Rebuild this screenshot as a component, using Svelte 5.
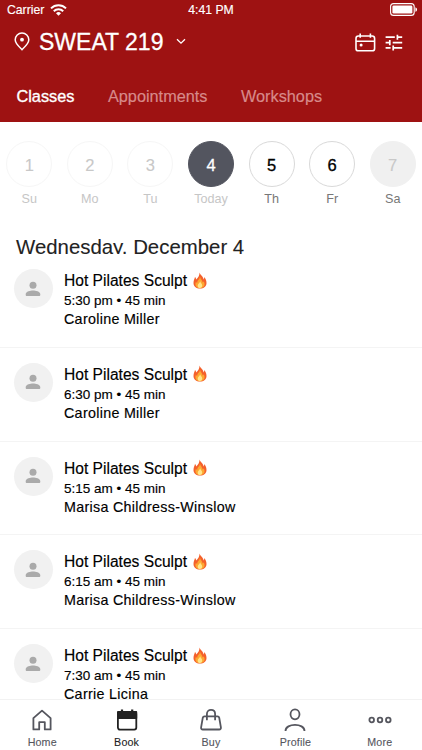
<script>
  let tabs = ["Classes", "Appointments", "Workshops"];
  let activeTab = "Classes";

  let days = [
    { date: 1, label: "Su", state: "past" },
    { date: 2, label: "Mo", state: "past" },
    { date: 3, label: "Tu", state: "past" },
    { date: 4, label: "Today", state: "selected" },
    { date: 5, label: "Th", state: "open" },
    { date: 6, label: "Fr", state: "open" },
    { date: 7, label: "Sa", state: "closed" },
  ];

  let classes = [
    { name: "Hot Pilates Sculpt", time: "5:30 pm", length: "45 min", teacher: "Caroline Miller" },
    { name: "Hot Pilates Sculpt", time: "6:30 pm", length: "45 min", teacher: "Caroline Miller" },
    { name: "Hot Pilates Sculpt", time: "5:15 am", length: "45 min", teacher: "Marisa Childress-Winslow" },
    { name: "Hot Pilates Sculpt", time: "6:15 am", length: "45 min", teacher: "Marisa Childress-Winslow" },
    { name: "Hot Pilates Sculpt", time: "7:30 am", length: "45 min", teacher: "Carrie Licina" },
  ];

  let nav = ["Home", "Book", "Buy", "Profile", "More"];
  let activeNav = "Book";
</script>

<div class="app">
  <header>
    <div class="status">
      <div class="carrier">
        <span>Carrier</span>
        <svg width="17" height="12" viewBox="0 0 17 12" fill="none" stroke="#fff" stroke-width="2">
          <path d="M1 4.4a10.6 10.6 0 0 1 15 0" />
          <path d="M3.8 7.2a6.6 6.6 0 0 1 9.4 0" />
          <path d="M8.5 11.8 6 9.3a3.5 3.5 0 0 1 5 0z" fill="#fff" stroke="none" />
        </svg>
      </div>
      <span class="clock">4:41 PM</span>
      <svg class="battery" width="28" height="13" viewBox="0 0 28 13">
        <rect x=".6" y=".6" width="23.6" height="11.8" rx="3" fill="none" stroke="#fff" stroke-width="1.1" />
        <rect x="2.4" y="2.4" width="20" height="8.2" rx="1.3" fill="#fff" />
        <path d="M25.4 4.2c2.2.8 2.2 3.8 0 4.6z" fill="#fff" />
      </svg>
    </div>

    <div class="location">
      <svg width="16" height="19" viewBox="0 0 16 19" fill="none" stroke="#fff" stroke-width="1.5">
        <path d="M8 17.6C5.4 15.1 1.2 11.6 1.2 7.8a6.8 6.8 0 0 1 13.6 0c0 3.8-4.2 7.3-6.8 9.8z" />
        <circle cx="8" cy="7.7" r="1.9" fill="#fff" stroke="none" />
      </svg>
      <h1>SWEAT 219</h1>
      <svg class="chevron" width="10" height="7" viewBox="0 0 10 7" fill="none" stroke="#fff" stroke-width="1.3">
        <path d="m1 1.2 4 4 4-4" />
      </svg>
      <div class="actions">
        <svg width="21" height="19" viewBox="0 0 21 19" fill="none" stroke="#fff" stroke-width="1.6">
          <rect x="1" y="3" width="18.6" height="14.8" rx="2.4" />
          <path d="M1 8.2h18.6M5.2.4v4.4M15.4.4v4.4" />
          <circle cx="6.1" cy="11.9" r="1.5" fill="#fff" stroke="none" />
        </svg>
        <svg width="18" height="17" viewBox="0 0 18 17" fill="none" stroke="#fff" stroke-width="1.7">
          <path d="M.6 3.2h9.2M12.4 3.2h4.8M12.4.7v5M.6 8.6h4M7.7 8.6h9.5M4.8 6v5.2M.6 13.9h5M8.2 13.9h9M8.2 11.4v5" />
        </svg>
      </div>
    </div>

    <div class="tabs">
      {#each tabs as tab}
        <span class:active={tab == activeTab}>{tab}</span>
      {/each}
    </div>
  </header>

  <div class="week">
    {#each days as day}
      <div class="day {day.state}">
        <div class="date">{day.date}</div>
        <span>{day.label}</span>
      </div>
    {/each}
  </div>

  <h2>Wednesday, December 4</h2>

  <main>
    {#each classes as item}
      <div class="class">
        <div class="avatar">
          <svg width="16" height="16" viewBox="0 0 16 16" fill="#aaa">
            <circle cx="8" cy="4.2" r="3.5" />
            <path d="M.7 13.2C.7 10.6 5.5 9.6 8 9.6s7.3 1 7.3 3.6v.6c0 .8-.4 1.200-1.200 1.200H1.900c-.8 0-1.200-.4-1.200-1.200z" />
          </svg>
        </div>
        <div class="info">
          <h3>
            {item.name}
            <svg width="14" height="17" viewBox="0 0 14 17">
              <path d="M6.5.5C7.2 3 10.3 4.3 10.7 7.5c.5-.6.6-1.5.4-2.4 1.6 1.6 2.4 3.7 2.4 5.9 0 3.3-2.7 5.6-6.500 5.600S.5 14.300.5 11C.5 8.500 1.500 6.800 2 4.900c.8.8 1.100 1.500 1.200 2.600C5.200 5.600 6.600 3.500 6.500.5z" fill="#f4602b" />
              <path d="M7 4.800c.3 2.200 2.400 3.300 2.700 5.800.5-.3.8-.8.9-1.400 2.200 3.300.5 6.900-3.500 6.900-3.800 0-5.700-2.900-4.100-6.400.3.600.6 1 1.100 1.200C4.200 8.200 6.800 7.300 7 4.800z" fill="#fda832" />
              <path d="M7.200 9.300c0 1.500 2 2.400 2 4.300 0 1.500-.9 2.400-2.200 2.400s-2.300-.9-2.300-2.300c0-1.800 2-2.300 2.500-4.400z" fill="#ffe58a" />
            </svg>
          </h3>
          <p class="time">{item.time} • {item.length}</p>
          <p class="teacher">{item.teacher}</p>
        </div>
      </div>
    {/each}
  </main>

  <nav>
    {#each nav as item}
      <div class="nav-item" class:active={item == activeNav}>
        <svg width="24" height="24" viewBox="0 0 24 24" fill="none" stroke="currentColor" stroke-width="1.8">
          {#if item == "Home"}
            <path d="M3.4 10.2 12 2.6l8.6 7.6v11.2h-5.8v-7.2H9.2v7.2H3.4z" stroke-linejoin="round" />
          {:else if item == "Book"}
            <rect x="2.9" y="4" width="18.4" height="17.6" rx="2" />
            <path d="M2.9 4h18.4v6.2H2.9z" fill="currentColor" stroke-linejoin="round" />
            <path d="M7 1.4V5M17.2 1.4V5" stroke-width="2.2" />
          {:else if item == "Buy"}
            <path d="M5.5 8.3h13c1 0 1.5.5 1.7 1.4l1.700 9.600c.2 1.400-.5 2.200-1.700 2.200H3.800c-1.200 0-1.900-.8-1.700-2.200l1.700-9.600c.2-.9.7-1.400 1.700-1.400z" />
            <path d="M7.9 12.2V6.1c0-5.6 8.2-5.6 8.2 0v6.1" />
          {:else if item == "Profile"}
            <ellipse cx="12" cy="6.3" rx="4.5" ry="5" />
            <path d="M2.5 23c0-8.2 19-8.2 19 0" />
          {:else}
            <circle cx="3.7" cy="12" r="2.3" />
            <circle cx="12" cy="12" r="2.3" />
            <circle cx="20.3" cy="12" r="2.3" />
          {/if}
        </svg>
        <span>{item}</span>
      </div>
    {/each}
  </nav>
</div>

<style>
  :global(body) {
    margin: 0;
  }

  h1,
  h2,
  h3,
  p {
    margin: 0;
    font-weight: normal;
  }

  svg {
    display: block;
    flex: none;
  }

  .app {
    width: 422px;
    height: 750px;
    display: flex;
    flex-direction: column;
    overflow: hidden;
    background: #fff;
    color: #000;
    font-family: "Liberation Sans", Arial, sans-serif;
  }

  header {
    height: 122px;
    flex: none;
    background: #9e1212;
    color: #fff;
  }

  .status {
    display: grid;
    grid-template-columns: 1fr auto 1fr;
    align-items: center;
    height: 19px;
    padding: 0 5px 0 7px;
    font-size: 12.2px;
    -webkit-text-stroke: 0.15px;
  }

  .clock {
    margin-right: 2px;
  }

  .carrier {
    display: flex;
    align-items: center;
    gap: 6px;
  }

  .battery {
    justify-self: end;
    margin-right: -1px;
  }

  .location {
    display: flex;
    align-items: center;
    height: 47px;
    padding: 0 19.5px 0 14px;
  }

  .location > svg:first-child {
    margin-top: -2px;
  }

  h1 {
    margin: 0 13px 0 9px;
    font-size: 23px;
    -webkit-text-stroke: 0.3px;
  }

  .chevron {
    margin-top: -2px;
  }

  .actions {
    display: flex;
    align-items: center;
    gap: 8.5px;
    margin-left: auto;
  }

  .tabs {
    display: flex;
    gap: 33.5px;
    padding: 20px 16.5px 0;
    font-size: 16.3px;
    line-height: 20px;
    color: #d78a8a;
    -webkit-text-stroke: 0.15px;
  }

  .tabs .active {
    color: #fff;
    -webkit-text-stroke: 0.35px #fff;
  }

  .week {
    display: grid;
    grid-template-columns: repeat(7, 1fr);
    flex: none;
    box-sizing: border-box;
    height: 92px;
    margin: 0 -1px;
    padding-top: 19px;
  }

  .day {
    display: flex;
    flex-direction: column;
    align-items: center;
    gap: 4px;
    font-size: 12.6px;
    line-height: 16px;
    color: #777;
  }

  .date {
    display: flex;
    align-items: center;
    justify-content: center;
    box-sizing: border-box;
    width: 46px;
    height: 46px;
    padding-top: 1px;
    border: 1px solid #d9d9d9;
    border-radius: 50%;
    font-size: 16.5px;
    color: #000;
    -webkit-text-stroke: 0.3px;
  }

  .past,
  .selected {
    color: #c6c6c6;
  }

  .past .date {
    border-color: #f6f6f6;
    color: #c8c8c8;
    -webkit-text-stroke: 0.1px;
  }

  .selected .date {
    border-color: #53555f;
    background: #53555f;
    color: #fff;
  }

  .closed .date {
    border-color: #f0f0f0;
    background: #f0f0f0;
    color: #c8c8c8;
    -webkit-text-stroke: 0.1px;
  }

  h2 {
    flex: none;
    box-sizing: border-box;
    height: 40px;
    padding: 21px 16px 0;
    overflow: hidden;
    font-size: 20.4px;
    line-height: 25px;
    color: #222;
    -webkit-text-stroke: 0.1px;
  }

  main {
    flex: 1;
    min-height: 0;
    overflow: hidden;
  }

  .class {
    display: flex;
    gap: 11px;
    box-sizing: border-box;
    height: 93.75px;
    padding: 15px 14px 0;
    border-bottom: 1px solid #f4f4f4;
  }

  .avatar {
    display: flex;
    align-items: center;
    justify-content: center;
    box-sizing: border-box;
    width: 39px;
    height: 39px;
    padding-right: 1px;
    border-radius: 50%;
    background: #f1f1f1;
  }

  .info {
    padding-top: 2px;
    -webkit-text-stroke: 0.15px;
  }

  h3 {
    display: flex;
    align-items: center;
    gap: 6px;
    font-size: 15.6px;
    line-height: 20px;
  }

  h3 svg {
    margin-top: -2px;
  }

  .time {
    font-size: 13.5px;
    line-height: 19px;
  }

  .teacher {
    font-size: 14.3px;
    line-height: 19px;
    letter-spacing: 0.3px;
  }

  nav {
    display: grid;
    grid-template-columns: repeat(5, 1fr);
    flex: none;
    box-sizing: border-box;
    height: 51px;
    border-top: 1px solid #f2f2f2;
    background: #fff;
  }

  .nav-item {
    display: flex;
    flex-direction: column;
    align-items: center;
    gap: 1px;
    padding-top: 8px;
    color: #55565e;
    font-size: 10.7px;
    line-height: 18px;
    letter-spacing: 0.15px;
    -webkit-text-stroke: 0.1px;
  }

  .nav-item.active {
    color: #222;
  }
</style>
